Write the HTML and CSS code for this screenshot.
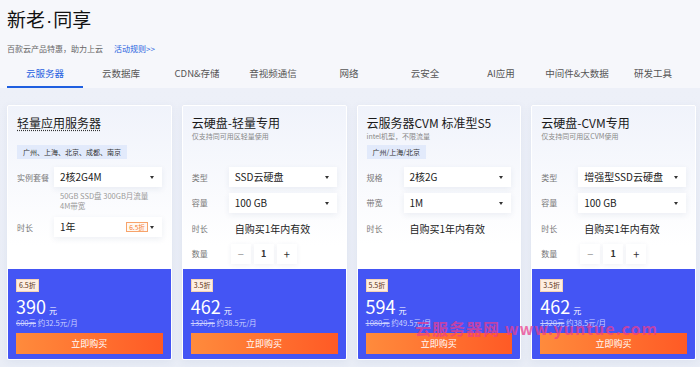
FILE: index.html
```html
<!DOCTYPE html>
<html lang="zh-CN">
<head>
  <meta charset="UTF-8" />
  <meta name="viewport" content="width=device-width, initial-scale=1.0" />
  <title>新老·同享</title>
  <link rel="stylesheet" href="styles.css">
</head>
<body>
  <div class="page">
    <header class="top">
      <h1 class="title">新老<span class="dot">·</span>同享</h1>
      <p class="intro">百款云产品特惠，助力上云<a class="rules" href="#">活动规则&gt;&gt;</a></p>
      <nav class="tabs">
        <span class="tab active">云服务器</span>
        <span class="tab">云数据库</span>
        <span class="tab">CDN&amp;存储</span>
        <span class="tab">音视频通信</span>
        <span class="tab">网络</span>
        <span class="tab">云安全</span>
        <span class="tab">AI应用</span>
        <span class="tab">中间件&amp;大数据</span>
        <span class="tab">研发工具</span>
      </nav>
    </header>

    <main class="cards">
      <!-- 轻量应用服务器 -->
      <article class="card">
        <div class="card-body">
          <div class="card-head">
            <h3 class="card-title dotted">轻量应用服务器</h3>
            <span class="tag">广州、上海、北京、成都、南京</span>
          </div>
          <div class="rows">
            <div class="row">
              <span class="label">实例套餐</span>
              <div class="select">2核2G4M<i class="caret"></i></div>
            </div>
            <div class="hint">50GB SSD盘 300GB月流量<br>4M带宽</div>
            <div class="row">
              <span class="label">时长</span>
              <div class="select">1年<span class="off">6.5折</span><i class="caret"></i></div>
            </div>
          </div>
        </div>
        <div class="buy">
          <span class="badge">6.5折</span>
          <div class="price">390<small>元</small></div>
          <div class="old"><s>600元</s> 约32.5元/月</div>
          <button class="btn">立即购买</button>
        </div>
      </article>

      <!-- 云硬盘-轻量专用 -->
      <article class="card">
        <div class="card-body">
          <div class="card-head">
            <h3 class="card-title">云硬盘-轻量专用</h3>
            <p class="card-sub">仅支持同可用区轻量使用</p>
          </div>
          <div class="rows">
            <div class="row">
              <span class="label">类型</span>
              <div class="select">SSD云硬盘<i class="caret"></i></div>
            </div>
            <div class="row">
              <span class="label">容量</span>
              <div class="select">100 GB<i class="caret"></i></div>
            </div>
            <div class="row">
              <span class="label">时长</span>
              <span class="value">自购买1年内有效</span>
            </div>
            <div class="row">
              <span class="label">数量</span>
              <div class="stepper">
                <span class="step minus">−</span>
                <span class="step num">1</span>
                <span class="step">+</span>
              </div>
            </div>
          </div>
        </div>
        <div class="buy">
          <span class="badge">3.5折</span>
          <div class="price">462<small>元</small></div>
          <div class="old"><s>1320元</s> 约38.5元/月</div>
          <button class="btn">立即购买</button>
        </div>
      </article>

      <!-- 云服务器CVM -->
      <article class="card">
        <div class="card-body">
          <div class="card-head">
            <h3 class="card-title">云服务器CVM 标准型S5</h3>
            <p class="card-sub">intel机型，不限流量</p>
            <span class="tag">广州/上海/北京</span>
          </div>
          <div class="rows">
            <div class="row">
              <span class="label">规格</span>
              <div class="select">2核2G<i class="caret"></i></div>
            </div>
            <div class="row">
              <span class="label">带宽</span>
              <div class="select">1M<i class="caret"></i></div>
            </div>
            <div class="row">
              <span class="label">时长</span>
              <span class="value">自购买1年内有效</span>
            </div>
          </div>
        </div>
        <div class="buy">
          <span class="badge">5.5折</span>
          <div class="price">594<small>元</small></div>
          <div class="old"><s>1080元</s> 约49.5元/月</div>
          <button class="btn">立即购买</button>
        </div>
      </article>

      <!-- 云硬盘-CVM专用 -->
      <article class="card">
        <div class="card-body">
          <div class="card-head">
            <h3 class="card-title">云硬盘-CVM专用</h3>
            <p class="card-sub">仅支持同可用区CVM使用</p>
          </div>
          <div class="rows">
            <div class="row">
              <span class="label">类型</span>
              <div class="select">增强型SSD云硬盘<i class="caret"></i></div>
            </div>
            <div class="row">
              <span class="label">容量</span>
              <div class="select">100 GB<i class="caret"></i></div>
            </div>
            <div class="row">
              <span class="label">时长</span>
              <span class="value">自购买1年内有效</span>
            </div>
            <div class="row">
              <span class="label">数量</span>
              <div class="stepper">
                <span class="step minus">−</span>
                <span class="step num">1</span>
                <span class="step">+</span>
              </div>
            </div>
          </div>
        </div>
        <div class="buy">
          <span class="badge">3.5折</span>
          <div class="price">462<small>元</small></div>
          <div class="old"><s>1320元</s> 约38.5元/月</div>
          <button class="btn">立即购买</button>
        </div>
      </article>
    </main>

    <div class="watermark">云服务器网 www.yuntue.com</div>
  </div>
</body>
</html>
```

FILE: styles.css
```css
* {
  box-sizing: border-box;
}
body {
  margin: 0;
  font-family: "Noto Sans CJK SC", "Noto Sans", sans-serif;
  color: #222;
  background: #edf0f8;
}
.page {
  position: relative;
  width: 700px;
  height: 367px;
  overflow: hidden;
}

/* header */
.top {
  background: #f6f7fb;
  padding: 7px 7px 0;
}
.title {
  margin: 0;
  font-size: 19px;
  line-height: 24px;
  font-weight: 400;
  color: #111;
}
.title .dot {
  font-family: "Liberation Sans", sans-serif;
  margin: 0 1px;
}
.intro {
  margin: 10px 0 0;
  font-size: 8px;
  line-height: 12px;
  color: #666;
}
.rules {
  margin-left: 11px;
  color: #1f5fe0;
  text-decoration: none;
}
.tabs {
  display: flex;
  margin-top: 6px;
}
.tab {
  width: 76px;
  text-align: center;
  font-size: 9.5px;
  line-height: 24px;
  padding-bottom: 1px;
  border-bottom: 2px solid transparent;
  color: #555;
}
.tab.active {
  color: #1f5fe0;
  border-bottom-color: #1f5fe0;
}

/* cards */
.cards {
  display: grid;
  grid-template-columns: repeat(4, 1fr);
  gap: 10px;
  padding: 17px 4px 0 7px;
  background: linear-gradient(180deg, #edf0f8, #e9edf6);
  height: 281px;
}
.card {
  display: flex;
  flex-direction: column;
  height: 255px;
  border: 1px solid #fff;
  border-radius: 2px;
  background: linear-gradient(180deg, #f0f3fb 0%, #fff 55%);
  box-shadow: 0 2px 8px rgba(60, 80, 140, 0.07);
  overflow: hidden;
}
.card-body {
  flex: 1;
  padding: 9px 9px 0;
}
.card-head {
  display: flex;
  flex-direction: column;
  align-items: flex-start;
  height: 52px;
}
.card-title {
  margin: 0;
  font-size: 12px;
  line-height: 15px;
  font-weight: 400;
  color: #1a1a1a;
}
.card-title.dotted {
  text-decoration: underline dotted #333;
  text-underline-offset: 2px;
}
.card-sub {
  margin: 0;
  font-size: 7px;
  line-height: 12px;
  color: #888;
}
.tag {
  margin-top: auto;
  margin-bottom: 8px;
  padding: 0 6px;
  font-size: 7px;
  line-height: 14px;
  color: #333;
  background: #e2eafb;
}

.rows {
  display: flex;
  flex-direction: column;
  gap: 5.5px;
}
.row {
  display: flex;
  align-items: center;
  height: 20px;
}
.label {
  width: 37px;
  flex-shrink: 0;
  font-size: 8px;
  color: #777;
}
.select {
  position: relative;
  flex: 1;
  height: 20px;
  padding-left: 6px;
  font-size: 10px;
  line-height: 20px;
  color: #222;
  background: #fff;
  box-shadow: 0 2px 6px rgba(40, 60, 120, 0.08);
}
.caret {
  position: absolute;
  right: 8px;
  top: 9px;
  border-top: 3px solid #333;
  border-left: 2.5px solid transparent;
  border-right: 2.5px solid transparent;
}
.off {
  position: absolute;
  right: 14px;
  top: 5px;
  padding: 0 2px;
  font-size: 6.5px;
  line-height: 8px;
  color: #f57a2f;
  border: 1px solid #f7a36b;
  background: #fff8f2;
}
.value {
  padding-left: 6px;
  font-size: 10px;
  color: #222;
}
.hint {
  margin: -2px 0 1px 43px;
  font-size: 7.5px;
  line-height: 10px;
  color: #9a9a9a;
}
.stepper {
  display: flex;
  gap: 3px;
  margin-left: 2px;
}
.step {
  width: 20px;
  height: 20px;
  text-align: center;
  font-size: 11px;
  line-height: 20px;
  color: #333;
  background: #fff;
  box-shadow: 0 1px 5px rgba(40, 60, 120, 0.07);
}
.step.minus {
  color: #999;
}
.step.num {
  font-size: 9px;
  font-weight: 700;
}

/* buy panel */
.buy {
  height: 90px;
  padding: 10px 8px 0;
  background: #4455f4;
  color: #fff;
}
.badge {
  display: block;
  width: fit-content;
  padding: 0 2px;
  font-size: 7px;
  line-height: 11px;
  color: #5a2e12;
  background: #fdeee2;
  border: 1px solid #f4d2b4;
}
.price {
  margin-top: 3px;
  font-size: 18px;
  line-height: 22px;
  height: 22px;
}
.price small {
  margin-left: 3px;
  font-size: 8px;
  line-height: 1;
}
.old {
  margin-top: 1px;
  font-size: 7.5px;
  line-height: 10px;
  height: 10px;
  color: #ccd1ff;
}
.btn {
  display: block;
  width: 100%;
  height: 21px;
  margin-top: 5px;
  border: none;
  padding: 0;
  font-family: inherit;
  font-size: 9px;
  color: #fff;
  background: linear-gradient(90deg, #ff8b3c, #ff5a25);
}

.watermark {
  position: absolute;
  left: 415px;
  top: 316px;
  font-size: 16px;
  font-weight: 700;
  letter-spacing: 1px;
  color: rgba(238, 60, 140, 0.72);
  white-space: nowrap;
}
```
